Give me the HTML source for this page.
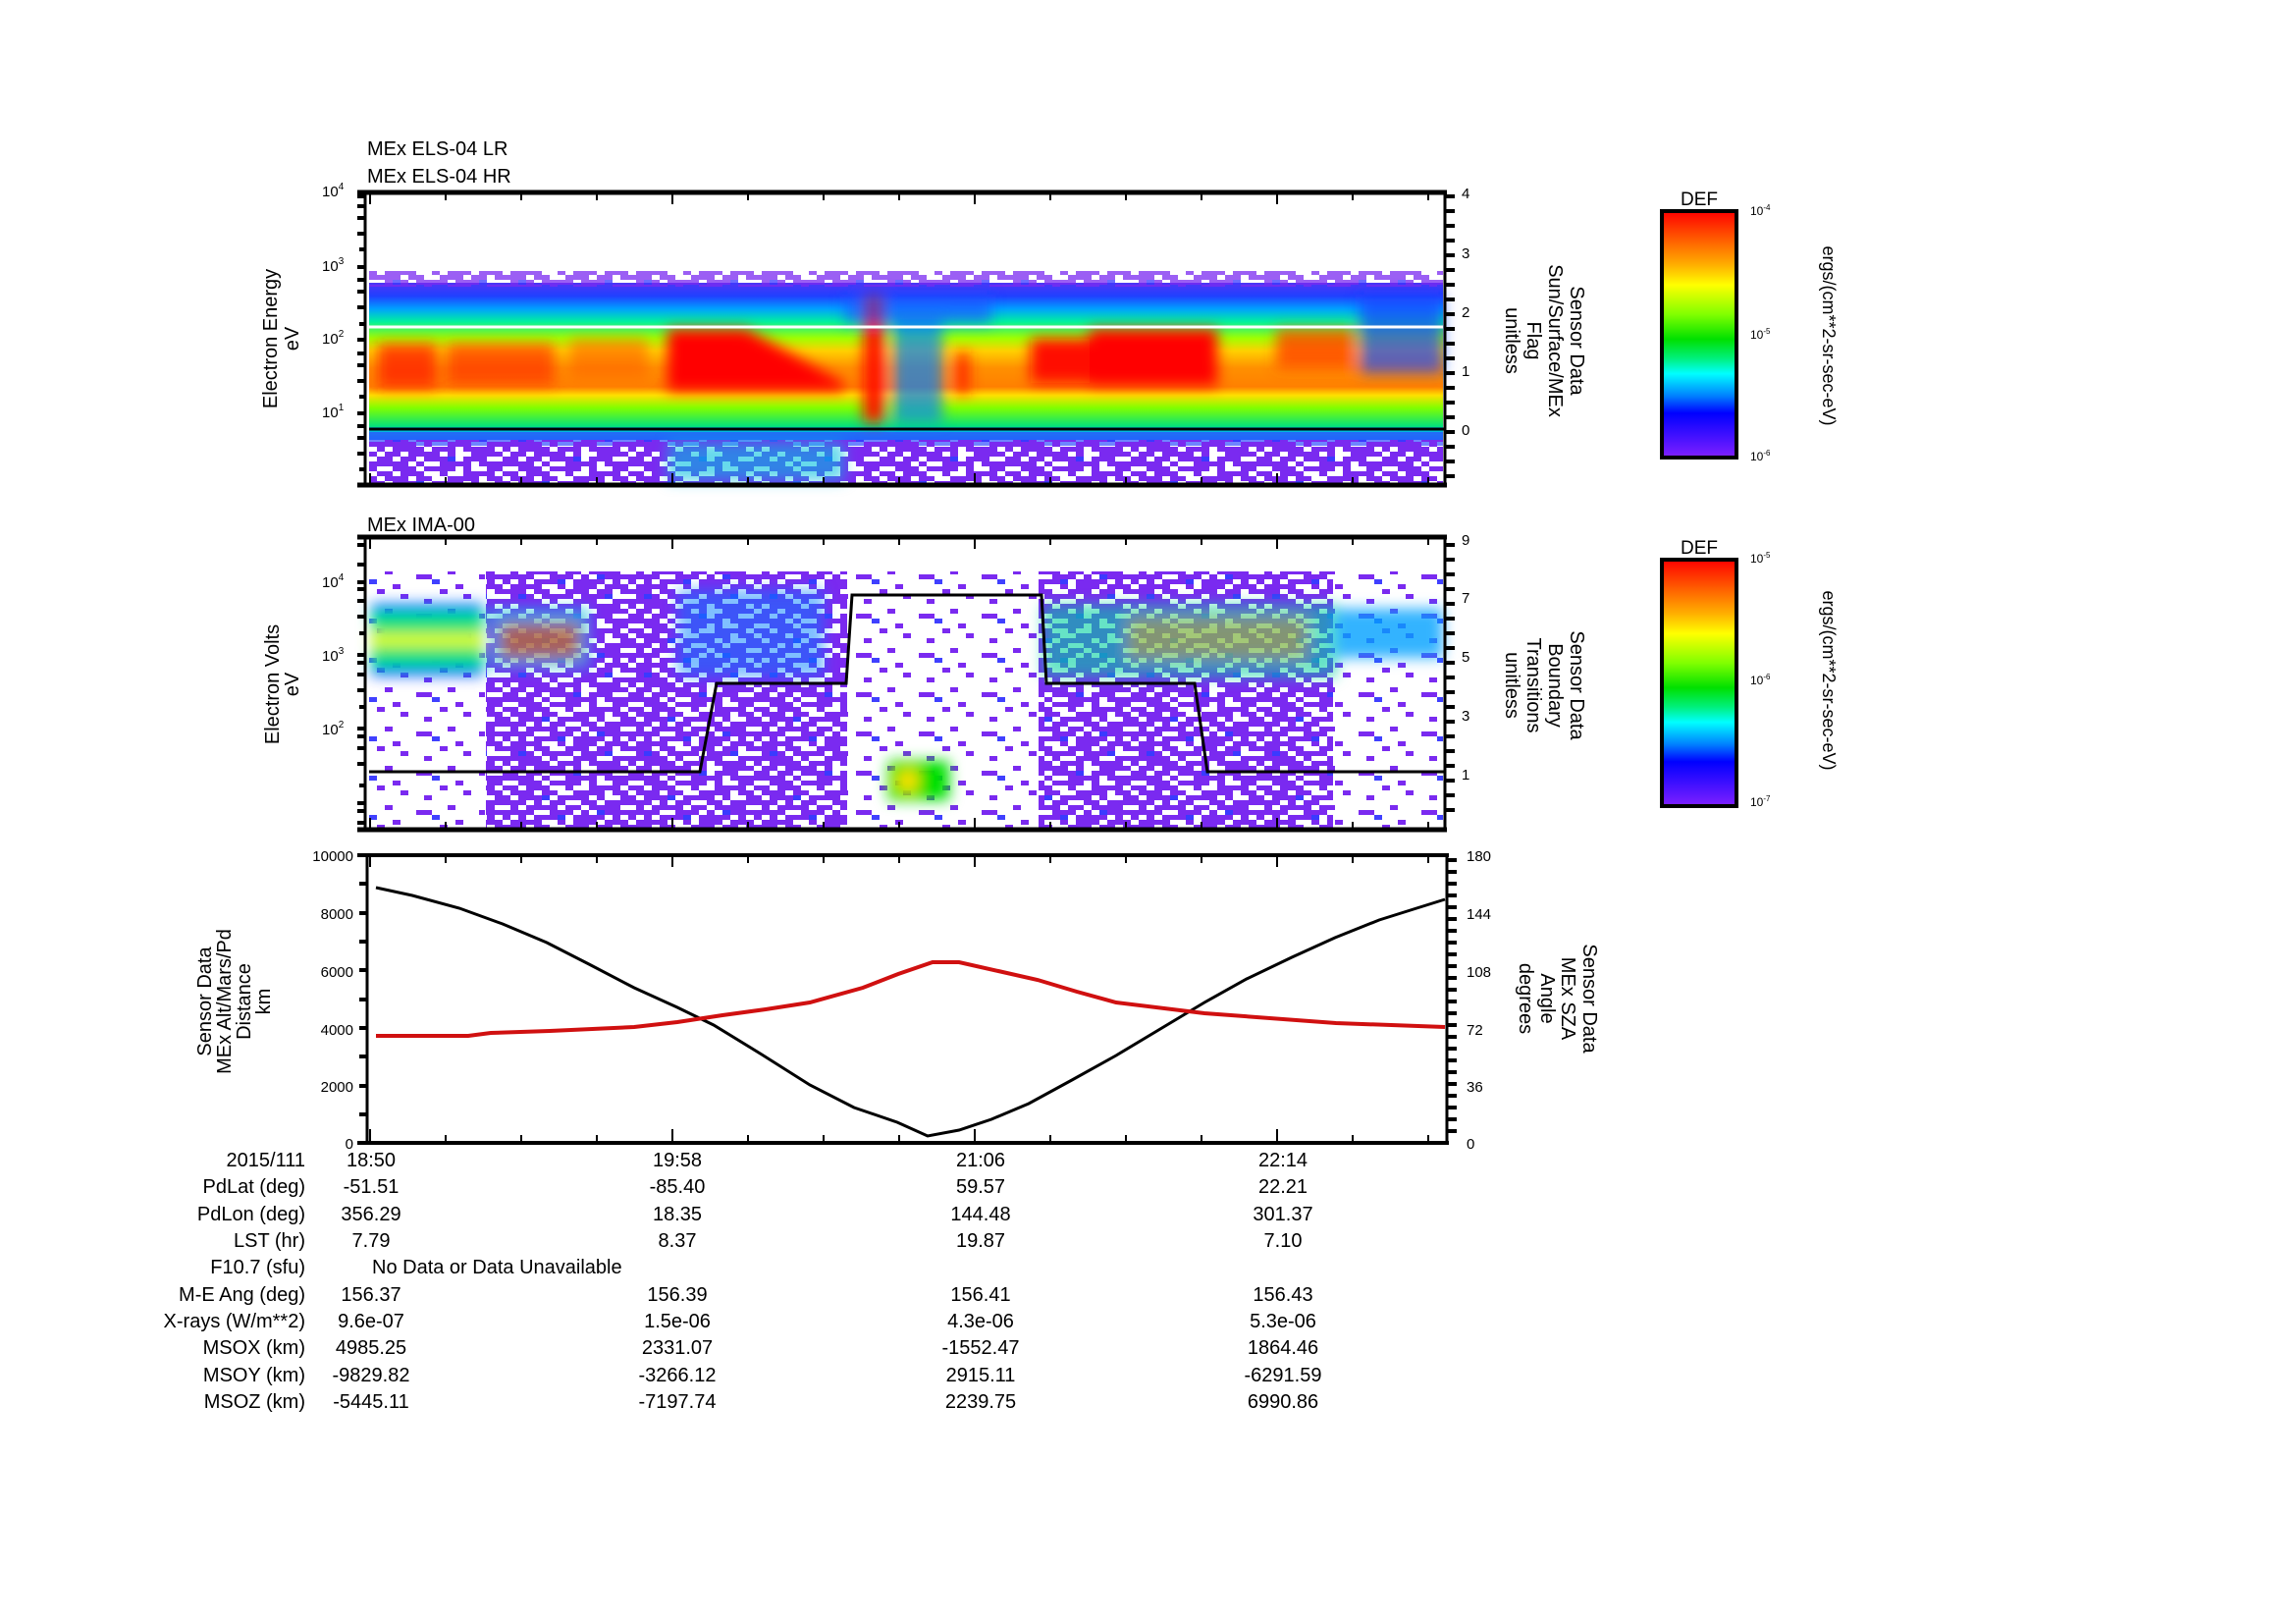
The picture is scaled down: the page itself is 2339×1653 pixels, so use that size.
<!DOCTYPE html>
<html><head><meta charset="utf-8"><style>
html,body{margin:0;padding:0;background:#fff}
svg{display:block}
text{font-family:"Liberation Sans",sans-serif;fill:#000}
</style></head><body>
<svg width="2339" height="1653" viewBox="0 0 2339 1653" xmlns="http://www.w3.org/2000/svg">
<defs>
<linearGradient id="cb" x1="0" y1="0" x2="0" y2="1">
<stop offset="0" stop-color="#f00"/><stop offset="0.12" stop-color="#ff6000"/><stop offset="0.22" stop-color="#ffb000"/><stop offset="0.3" stop-color="#ffff00"/><stop offset="0.42" stop-color="#80ff00"/><stop offset="0.52" stop-color="#00e000"/><stop offset="0.6" stop-color="#00f080"/><stop offset="0.66" stop-color="#00ffff"/><stop offset="0.75" stop-color="#0080ff"/><stop offset="0.82" stop-color="#0000ff"/><stop offset="1" stop-color="#8020ff"/>
</linearGradient>
<linearGradient id="els" gradientUnits="userSpaceOnUse" x1="0" y1="280" x2="0" y2="495">
<stop offset="0" stop-color="#6a30f0"/><stop offset="0.1" stop-color="#2040ff"/><stop offset="0.16" stop-color="#00a0ff"/><stop offset="0.22" stop-color="#00f0a0"/><stop offset="0.3" stop-color="#a0ff00"/><stop offset="0.36" stop-color="#ffd000"/><stop offset="0.44" stop-color="#ff9000"/><stop offset="0.53" stop-color="#ff8000"/><stop offset="0.57" stop-color="#ffe000"/><stop offset="0.63" stop-color="#80ff00"/><stop offset="0.72" stop-color="#00e080"/><stop offset="0.72" stop-color="#00d0d0"/><stop offset="0.8" stop-color="#0080ff"/><stop offset="0.9" stop-color="#3030ff"/><stop offset="1" stop-color="#7a2af0"/>
</linearGradient>
<pattern id="sp" width="128" height="80" patternUnits="userSpaceOnUse">
<path fill="#7a2af0" d="M0 0h16v5h-16zM24 0h24v5h-24zM64 0h8v5h-8zM88 0h32v5h-32z
M8 5h24v5h-24zM40 5h16v5h-16zM72 5h32v5h-32zM112 5h16v5h-16z
M0 10h8v5h-8zM16 10h24v5h-24zM56 10h32v5h-32zM96 10h8v5h-8zM120 10h8v5h-8z
M0 15h24v5h-24zM32 15h8v5h-8zM48 15h16v5h-16zM80 15h16v5h-16zM104 15h24v5h-24z
M8 20h8v5h-8zM24 20h32v5h-32zM64 20h16v5h-16zM88 20h32v5h-32z
M0 25h32v5h-32zM48 25h24v5h-24zM80 25h8v5h-8zM104 25h24v5h-24z
M0 30h8v5h-8zM16 30h8v5h-8zM32 30h32v5h-32zM72 30h32v5h-32zM112 30h8v5h-8z
M8 35h32v5h-32zM56 35h8v5h-8zM72 35h24v5h-24zM104 35h24v5h-24z
M0 40h24v5h-24zM32 40h16v5h-16zM64 40h24v5h-24zM96 40h16v5h-16zM120 40h8v5h-8z
M8 45h8v5h-8zM24 45h8v5h-8zM40 45h32v5h-32zM80 45h24v5h-24z
M0 50h40v5h-40zM48 50h8v5h-8zM72 50h24v5h-24zM112 50h16v5h-16z
M0 55h8v5h-8zM16 55h32v5h-32zM56 55h24v5h-24zM88 55h32v5h-32z
M8 60h16v5h-16zM32 60h32v5h-32zM72 60h8v5h-8zM96 60h32v5h-32z
M0 65h16v5h-16zM24 65h16v5h-16zM48 65h24v5h-24zM88 65h24v5h-24z
M0 70h32v5h-32zM40 70h8v5h-8zM64 70h32v5h-32zM104 70h24v5h-24z
M16 75h24v5h-24zM48 75h32v5h-32zM88 75h8v5h-8zM112 75h16v5h-16z"/>
<path fill="#3a3aff" d="M40 10h8v5h-8zM96 25h8v5h-8zM16 45h8v5h-8zM72 65h8v5h-8zM104 45h8v5h-8zM56 30h8v5h-8z"/>
</pattern>
<pattern id="sp2" width="64" height="40" patternUnits="userSpaceOnUse">
<rect x="0" y="0" width="8" height="5" fill="#7a2af0"/><rect x="24" y="5" width="8" height="5" fill="#7a2af0"/>
<rect x="48" y="10" width="8" height="5" fill="#7a2af0"/><rect x="8" y="20" width="8" height="5" fill="#7a2af0"/>
<rect x="40" y="25" width="16" height="5" fill="#7a2af0"/><rect x="16" y="35" width="8" height="5" fill="#7a2af0"/>
<rect x="56" y="30" width="8" height="5" fill="#4040ff"/>
</pattern>
<filter id="bl"><feGaussianBlur stdDeviation="7"/></filter>
</defs>

<text x="374" y="158" font-size="20">MEx ELS-04 LR</text>
<text x="374" y="186" font-size="20">MEx ELS-04 HR</text>
<text x="374" y="541" font-size="20">MEx IMA-00</text>

<!-- PANEL 1 -->
<rect x="376" y="280" width="1094" height="214" fill="url(#els)"/>
<rect x="376" y="270" width="1094" height="18" fill="#fff"/>
<rect x="376" y="276" width="1094" height="16" fill="url(#sp)" opacity="0.75"/>
<rect x="376" y="448" width="1094" height="46" fill="#fff"/>
<rect x="376" y="440" width="1094" height="14" fill="#3050ff" opacity="0.7"/>
<rect x="376" y="448" width="1094" height="46" fill="url(#sp)"/>
<g filter="url(#bl)">
<rect x="385" y="350" width="60" height="45" fill="#ff2000" opacity="0.8"/>
<rect x="455" y="350" width="110" height="42" fill="#ff3000" opacity="0.7"/>
<rect x="580" y="345" width="80" height="40" fill="#ff6000" opacity="0.6"/>
<path d="M680 335 L760 335 L860 390 L860 398 L680 398Z" fill="#ff0000"/>
<rect x="1050" y="345" width="60" height="45" fill="#ff1000"/>
<rect x="1110" y="335" width="130" height="58" fill="#ff0000"/>
<rect x="1300" y="335" width="80" height="40" fill="#ff4000" opacity="0.8"/>
<rect x="880" y="300" width="20" height="130" fill="#ff1000"/>
<rect x="975" y="360" width="12" height="40" fill="#ff2000"/>
<rect x="910" y="320" width="50" height="110" fill="#0080ff" opacity="0.7"/>
<rect x="1385" y="300" width="85" height="80" fill="#2040ff" opacity="0.7"/>
<rect x="680" y="450" width="180" height="40" fill="#00c0e0" opacity="0.6"/>
<rect x="860" y="300" width="150" height="30" fill="#2050ff" opacity="0.6"/>
</g>
<line x1="376" y1="333" x2="1470" y2="333" stroke="#fff" stroke-width="3"/>
<line x1="376" y1="437" x2="1472" y2="437" stroke="#000" stroke-width="3"/>
<g stroke="#000" fill="none">
<line x1="364" y1="196" x2="1474" y2="196" stroke-width="5"/>
<line x1="364" y1="494" x2="1474" y2="494" stroke-width="5"/>
<line x1="372" y1="196" x2="372" y2="494" stroke-width="3"/>
<line x1="1472" y1="196" x2="1472" y2="494" stroke-width="3"/>
</g>
<text x="328" y="200" font-size="15">10<tspan font-size="10" dy="-7">4</tspan></text>
<text x="328" y="276" font-size="15">10<tspan font-size="10" dy="-7">3</tspan></text>
<text x="328" y="350" font-size="15">10<tspan font-size="10" dy="-7">2</tspan></text>
<text x="328" y="425" font-size="15">10<tspan font-size="10" dy="-7">1</tspan></text>
<g font-size="15"><text x="1489" y="202">4</text><text x="1489" y="263">3</text><text x="1489" y="323">2</text><text x="1489" y="383">1</text><text x="1489" y="443">0</text></g>
<text transform="translate(282,345) rotate(-90)" font-size="20" text-anchor="middle">Electron Energy</text>
<text transform="translate(304,345) rotate(-90)" font-size="20" text-anchor="middle">eV</text>
<g font-size="20" text-anchor="middle">
<text transform="translate(1600,347) rotate(90)">Sensor Data</text>
<text transform="translate(1578,347) rotate(90)">Sun/Surface/MEx</text>
<text transform="translate(1556,347) rotate(90)">Flag</text>
<text transform="translate(1534,347) rotate(90)">unitless</text>
</g>

<!-- PANEL 2 -->
<rect x="495" y="582" width="368" height="262" fill="url(#sp)"/>
<rect x="863" y="582" width="195" height="262" fill="url(#sp2)"/>
<rect x="1058" y="582" width="300" height="262" fill="url(#sp)"/>
<rect x="1358" y="582" width="112" height="262" fill="url(#sp2)"/>
<rect x="376" y="582" width="118" height="262" fill="url(#sp2)"/>
<g filter="url(#bl)">
<rect x="378" y="620" width="114" height="60" fill="#00e080"/>
<rect x="378" y="645" width="114" height="14" fill="#e0ff00"/>
<rect x="378" y="615" width="114" height="8" fill="#0060ff"/>
<rect x="378" y="680" width="114" height="8" fill="#0040ff"/>
<rect x="500" y="620" width="100" height="60" fill="#00c0e0" opacity="0.7"/>
<rect x="510" y="635" width="80" height="35" fill="#ff4000" opacity="0.6"/>
<rect x="690" y="600" width="150" height="90" fill="#0080ff" opacity="0.5"/>
<rect x="1062" y="615" width="300" height="75" fill="#00d0a0" opacity="0.6"/>
<rect x="1150" y="630" width="180" height="40" fill="#ffa000" opacity="0.4"/>
<rect x="1360" y="620" width="110" height="50" fill="#00a0ff" opacity="0.8"/>
<rect x="905" y="775" width="62" height="40" fill="#00e000"/>
<rect x="915" y="785" width="20" height="20" fill="#ffe000"/>
</g>
<polyline points="376,786 713,786 730,696 862,696 868,606 1061,606 1066,696 1217,696 1230,786 1472,786" fill="none" stroke="#000" stroke-width="3"/>
<g stroke="#000" fill="none">
<line x1="364" y1="547" x2="1474" y2="547" stroke-width="5"/>
<line x1="364" y1="845" x2="1474" y2="845" stroke-width="5"/>
<line x1="372" y1="547" x2="372" y2="845" stroke-width="3"/>
<line x1="1472" y1="547" x2="1472" y2="845" stroke-width="3"/>
</g>
<text x="328" y="598" font-size="15">10<tspan font-size="10" dy="-7">4</tspan></text>
<text x="328" y="673" font-size="15">10<tspan font-size="10" dy="-7">3</tspan></text>
<text x="328" y="748" font-size="15">10<tspan font-size="10" dy="-7">2</tspan></text>
<g font-size="15"><text x="1489" y="555">9</text><text x="1489" y="614">7</text><text x="1489" y="674">5</text><text x="1489" y="734">3</text><text x="1489" y="794">1</text></g>
<text transform="translate(284,697) rotate(-90)" font-size="20" text-anchor="middle">Electron Volts</text>
<text transform="translate(304,697) rotate(-90)" font-size="20" text-anchor="middle">eV</text>
<g font-size="20" text-anchor="middle">
<text transform="translate(1600,698) rotate(90)">Sensor Data</text>
<text transform="translate(1578,698) rotate(90)">Boundary</text>
<text transform="translate(1556,698) rotate(90)">Transitions</text>
<text transform="translate(1534,698) rotate(90)">unitless</text>
</g>

<!-- PANEL 3 -->
<polyline points="383,904 420,912 468,925 512,941 557,960 600,982 646,1006 690,1026 727,1044 776,1074 825,1105 870,1128 914,1143 945,1157 977,1151 1010,1140 1048,1124 1092,1100 1137,1075 1182,1048 1227,1021 1270,997 1316,975 1360,955 1405,937 1440,926 1472,916" fill="none" stroke="#000" stroke-width="3"/>
<polyline points="383,1055 477,1055 500,1052 560,1050 646,1046 690,1041 736,1034 780,1028 825,1021 879,1006 915,992 950,980 977,980 1017,989 1057,998 1097,1010 1137,1021 1227,1032 1361,1042 1472,1046" fill="none" stroke="#d01010" stroke-width="4"/>
<g stroke="#000" fill="none">
<line x1="364" y1="871" x2="1476" y2="871" stroke-width="4"/>
<line x1="364" y1="1164" x2="1476" y2="1164" stroke-width="4"/>
<line x1="374" y1="871" x2="374" y2="1164" stroke-width="3"/>
<line x1="1474" y1="871" x2="1474" y2="1164" stroke-width="3"/>
</g>
<g font-size="15" text-anchor="end">
<text x="360" y="877">10000</text><text x="360" y="936">8000</text><text x="360" y="995">6000</text><text x="360" y="1054">4000</text><text x="360" y="1112">2000</text><text x="360" y="1170">0</text>
</g>
<g font-size="15"><text x="1494" y="877">180</text><text x="1494" y="936">144</text><text x="1494" y="995">108</text><text x="1494" y="1054">72</text><text x="1494" y="1112">36</text><text x="1494" y="1170">0</text></g>
<g font-size="20" text-anchor="middle">
<text transform="translate(215,1020) rotate(-90)">Sensor Data</text>
<text transform="translate(235,1020) rotate(-90)">MEx Alt/Mars/Pd</text>
<text transform="translate(255,1020) rotate(-90)">Distance</text>
<text transform="translate(275,1020) rotate(-90)">km</text>
</g>
<g font-size="20" text-anchor="middle" style="fill:#d01010">
<text transform="translate(1613,1017) rotate(90)" fill="#d01010">Sensor Data</text>
<text transform="translate(1591,1017) rotate(90)" fill="#d01010">MEx SZA</text>
<text transform="translate(1570,1017) rotate(90)" fill="#d01010">Angle</text>
<text transform="translate(1548,1017) rotate(90)" fill="#d01010">degrees</text>
</g>

<g stroke="#000" stroke-width="2">
<path d="M377 196v12M454 196v8M531 196v8M608 196v8M685 196v12M762 196v8M839 196v8M916 196v8M993 196v12M1070 196v8M1147 196v8M1224 196v8M1301 196v12M1378 196v8M1455 196v8"/>
<path d="M377 494v-12M454 494v-8M531 494v-8M608 494v-8M685 494v-12M762 494v-8M839 494v-8M916 494v-8M993 494v-12M1070 494v-8M1147 494v-8M1224 494v-8M1301 494v-12M1378 494v-8M1455 494v-8"/>
<path d="M377 547v12M454 547v8M531 547v8M608 547v8M685 547v12M762 547v8M839 547v8M916 547v8M993 547v12M1070 547v8M1147 547v8M1224 547v8M1301 547v12M1378 547v8M1455 547v8"/>
<path d="M377 845v-12M454 845v-8M531 845v-8M608 845v-8M685 845v-12M762 845v-8M839 845v-8M916 845v-8M993 845v-12M1070 845v-8M1147 845v-8M1224 845v-8M1301 845v-12M1378 845v-8M1455 845v-8"/>
<path d="M377 871v12M454 871v8M531 871v8M608 871v8M685 871v12M762 871v8M839 871v8M916 871v8M993 871v12M1070 871v8M1147 871v8M1224 871v8M1301 871v12M1378 871v8M1455 871v8"/>
<path d="M377 1164v-14M454 1164v-8M531 1164v-8M608 1164v-8M685 1164v-14M762 1164v-8M839 1164v-8M916 1164v-8M993 1164v-14M1070 1164v-8M1147 1164v-8M1224 1164v-8M1301 1164v-14M1378 1164v-8M1455 1164v-8"/>
</g>
<g stroke="#000" stroke-width="4">
<path d="M364 200h8M364 210h8M364 222h8M364 238h8M366 254h6M364 272h8M364 285h8M364 297h8M364 313h8M366 330h6M364 346h8M364 360h8M364 372h8M364 388h8M366 404h6M364 421h8M364 434h8M364 446h8M364 462h8M366 478h6"/>
<path d="M1472 200h10M1472 215h10M1472 230h10M1472 245h10M1472 260h10M1472 275h10M1472 290h10M1472 305h10M1472 320h10M1472 335h10M1472 350h10M1472 365h10M1472 380h10M1472 395h10M1472 410h10M1472 425h10M1472 440h10M1472 455h10M1472 470h10M1472 485h10"/>
<path d="M364 555h8M364 575h8M364 593h8M364 600h8M364 612h8M364 628h8M366 645h6M364 667h8M364 675h8M364 687h8M364 703h8M366 720h6M364 742h8M364 750h8M364 762h8M364 778h8M366 800h6M364 818h8M364 826h8M364 838h8"/>
<path d="M1472 555h10M1472 570h10M1472 585h10M1472 600h10M1472 615h10M1472 630h10M1472 645h10M1472 660h10M1472 675h10M1472 690h10M1472 705h10M1472 720h10M1472 735h10M1472 750h10M1472 765h10M1472 780h10M1472 795h10M1472 810h10M1472 825h10"/>
<path d="M366 871h8M366 900h8M366 930h8M366 959h8M366 988h8M366 1018h8M366 1047h8M366 1076h8M366 1106h8M366 1135h8"/>
<path d="M1474 876h10M1474 888h10M1474 900h10M1474 912h10M1474 924h10M1474 936h10M1474 948h10M1474 960h10M1474 972h10M1474 984h10M1474 996h10M1474 1008h10M1474 1020h10M1474 1032h10M1474 1044h10M1474 1056h10M1474 1068h10M1474 1080h10M1474 1092h10M1474 1104h10M1474 1116h10M1474 1128h10M1474 1140h10M1474 1152h10"/>
</g>

<rect x="1693" y="215" width="76" height="251" fill="url(#cb)" stroke="#000" stroke-width="4"/>
<text x="1731" y="209" font-size="19" text-anchor="middle">DEF</text>
<g font-size="12"><text x="1783" y="219">10<tspan font-size="8" dy="-5">-4</tspan></text><text x="1783" y="345">10<tspan font-size="8" dy="-5">-5</tspan></text><text x="1783" y="469">10<tspan font-size="8" dy="-5">-6</tspan></text></g>
<text transform="translate(1857,342) rotate(90)" font-size="18" text-anchor="middle">ergs/(cm**2-sr-sec-eV)</text>
<rect x="1693" y="570" width="76" height="251" fill="url(#cb)" stroke="#000" stroke-width="4"/>
<text x="1731" y="564" font-size="19" text-anchor="middle">DEF</text>
<g font-size="12"><text x="1783" y="573">10<tspan font-size="8" dy="-5">-5</tspan></text><text x="1783" y="697">10<tspan font-size="8" dy="-5">-6</tspan></text><text x="1783" y="821">10<tspan font-size="8" dy="-5">-7</tspan></text></g>
<text transform="translate(1857,693) rotate(90)" font-size="18" text-anchor="middle">ergs/(cm**2-sr-sec-eV)</text>

<g font-size="20" text-anchor="end">
<text x="311" y="1188">2015/111</text><text x="311" y="1215">PdLat (deg)</text><text x="311" y="1243">PdLon (deg)</text><text x="311" y="1270">LST (hr)</text><text x="311" y="1297">F10.7 (sfu)</text><text x="311" y="1325">M-E Ang (deg)</text><text x="311" y="1352">X-rays (W/m**2)</text><text x="311" y="1379">MSOX (km)</text><text x="311" y="1407">MSOY (km)</text><text x="311" y="1434">MSOZ (km)</text>
</g>
<g font-size="20" text-anchor="middle">
<text x="378" y="1188">18:50</text><text x="690" y="1188">19:58</text><text x="999" y="1188">21:06</text><text x="1307" y="1188">22:14</text>
<text x="378" y="1215">-51.51</text><text x="690" y="1215">-85.40</text><text x="999" y="1215">59.57</text><text x="1307" y="1215">22.21</text>
<text x="378" y="1243">356.29</text><text x="690" y="1243">18.35</text><text x="999" y="1243">144.48</text><text x="1307" y="1243">301.37</text>
<text x="378" y="1270">7.79</text><text x="690" y="1270">8.37</text><text x="999" y="1270">19.87</text><text x="1307" y="1270">7.10</text>
<text x="378" y="1325">156.37</text><text x="690" y="1325">156.39</text><text x="999" y="1325">156.41</text><text x="1307" y="1325">156.43</text>
<text x="378" y="1352">9.6e-07</text><text x="690" y="1352">1.5e-06</text><text x="999" y="1352">4.3e-06</text><text x="1307" y="1352">5.3e-06</text>
<text x="378" y="1379">4985.25</text><text x="690" y="1379">2331.07</text><text x="999" y="1379">-1552.47</text><text x="1307" y="1379">1864.46</text>
<text x="378" y="1407">-9829.82</text><text x="690" y="1407">-3266.12</text><text x="999" y="1407">2915.11</text><text x="1307" y="1407">-6291.59</text>
<text x="378" y="1434">-5445.11</text><text x="690" y="1434">-7197.74</text><text x="999" y="1434">2239.75</text><text x="1307" y="1434">6990.86</text>
</g>
<text x="379" y="1297" font-size="20">No Data or Data Unavailable</text>
</svg>
</body></html>
